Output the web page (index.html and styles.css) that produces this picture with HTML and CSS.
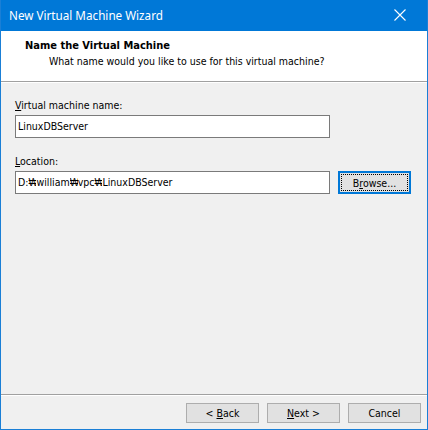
FILE: index.html
```html
<!DOCTYPE html>
<html>
<head>
<meta charset="utf-8">
<link rel="stylesheet" href="styles.css">
</head>
<body>
<div class="window">
  <div class="titlebar">
    <span class="title">New Virtual Machine Wizard</span>
    <svg class="close" width="12" height="12" viewBox="0 0 12 12"><path d="M0.5 0.5 L11.5 11.5 M11.5 0.5 L0.5 11.5" stroke="#fff" stroke-width="1.1" fill="none"/></svg>
  </div>
  <div class="header">
    <div class="h-title">Name the Virtual Machine</div>
    <div class="h-sub">What name would you like to use for this virtual machine?</div>
  </div>
  <div class="etched"></div>
  <div class="content">
    <div class="label"><u>V</u>irtual machine name:</div>
    <div class="field wide">LinuxDBServer</div>
    <div class="label loc"><u>L</u>ocation:</div>
    <div class="row">
      <div class="field">D:<span class="won">₩</span>william<span class="won">₩</span>vpc<span class="won">₩</span>LinuxDBServer</div>
      <div class="btn focused"><span class="focus"><span>B<u>r</u>owse...</span></span></div>
    </div>
  </div>
  <div class="footer">
    <div class="etched2"></div>
    <div class="buttons">
      <div class="btn"><span>&lt; <u>B</u>ack</span></div>
      <div class="btn"><span><u>N</u>ext &gt;</span></div>
      <div class="btn"><span>Cancel</span></div>
    </div>
  </div>
</div>
</body>
</html>
```
FILE: styles.css
```css
* { box-sizing: border-box; }
html, body { margin: 0; padding: 0; background: #f0f0f0; }
body { font-family: "DejaVu Sans Condensed", "DejaVu Sans", sans-serif; font-size: 10.5px; color: #000; }
.window {
  width: 428px; height: 430px;
  border: 1px solid #1a7fd6;
  border-top: none;
  display: flex; flex-direction: column;
  background: #f0f0f0;
}
.titlebar {
  height: 31px; background: #0078d7;
  display: flex; align-items: center; justify-content: space-between;
  padding: 0 21px 0 8px;
}
.title { color: #fff; font-family: "Noto Sans", sans-serif; font-size: 11.7px; padding-bottom: 1px; }
.close { display: block; margin-top: -1px; }
.header {
  background: #fff; height: 50px;
  padding: 8px 0 0 24px;
  line-height: 14px;
}
.h-title { font-weight: bold; font-size: 11px; }
.h-sub { padding-left: 24px; margin-top: 1px; }
.etched { border-top: 1px solid #a0a0a0; border-bottom: 1px solid #fff; }
.content { flex: 1; padding: 15px 14px 0 14px; }
.label { line-height: 14px; height: 14px; }
.field {
  margin-top: 3px;
  width: 315px; height: 23px;
  background: #fff; border: 1px solid #7a7a7a;
  padding: 0 0 0 2px; line-height: 21px;
  white-space: nowrap;
}
.won { font-family: "Liberation Sans", sans-serif; font-size: 10px; display: inline-block; width: 8px; text-align: center; overflow: hidden; vertical-align: top; }
.field.wide { margin-bottom: 16px; }
.row { display: flex; gap: 8px; margin-top: 3px; align-items: flex-start; }
.row .field { margin-top: 0; }
.btn {
  width: 73px; height: 20px;
  background: #e1e1e1; border: 1px solid #adadad;
  display: flex; align-items: center; justify-content: center;
  line-height: 14px; white-space: pre;
}
.btn.focused {
  height: 23px; border: 2px solid #0078d7; padding: 1px;
}
.focus {
  flex: 1; align-self: stretch;
  border: 1px dotted #000;
  display: flex; align-items: center; justify-content: center;
}
.footer { height: 35px; }
.etched2 { border-top: 1px solid #a0a0a0; border-bottom: 1px solid #fff; }
.buttons {
  display: flex; justify-content: flex-end; gap: 8px;
  padding: 7px 6px 0 0;
}
```
